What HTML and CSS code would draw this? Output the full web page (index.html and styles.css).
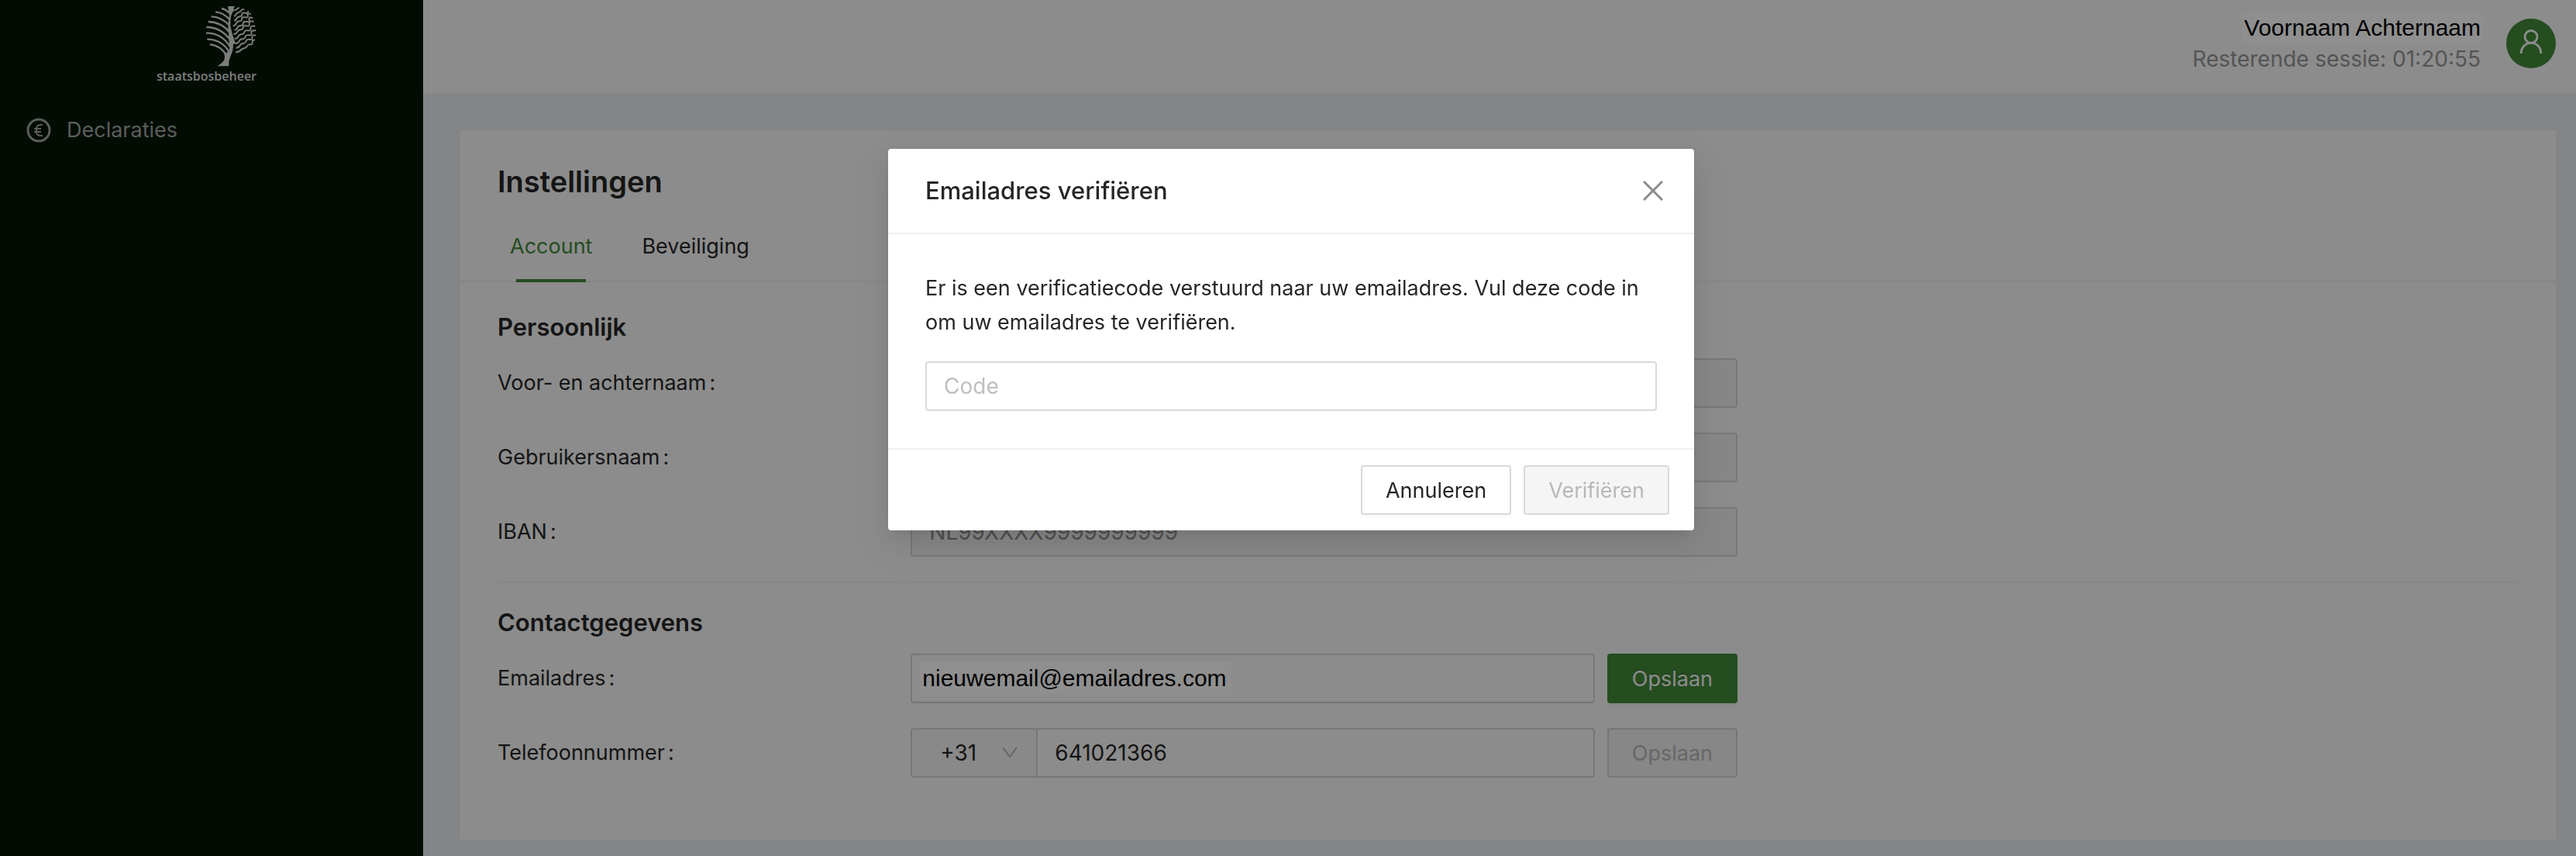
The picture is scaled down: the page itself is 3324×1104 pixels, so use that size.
FILE: index.html
```html
<!DOCTYPE html>
<html lang="nl">
<head>
  <meta charset="UTF-8" />
  <meta name="viewport" content="width=device-width, initial-scale=1.0"/>
  <title>Instellingen</title>
  <link rel="stylesheet" href="styles.css">
</head>
<body>

  <div class="layout">

    <!-- Sidebar -->
    <aside class="sidebar">
      <div class="logo">
        <svg class="logo-tree" viewBox="0 0 195 234" aria-hidden="true">
          <path fill="currentColor" d="M84 0h28l-6 8 4 8-8 8-5 12-3 18v22l7 30 6 19 8 20-11 2 1 8-3 20-8 20-6 18v19H44l16-12 9-10 3-12-2-14 12-6 8-8-1-34-2-28-2-20 1-28 4-24-2-14z"/>
          <g fill="none" stroke="currentColor" stroke-width="7">
            <path d="M60 9q16 3 33 20"/>
            <path d="M36 22q30 2 57 31"/>
            <path d="M20 40q38 0 71 35"/>
            <path d="M8 60q50 1 83 41"/>
            <path d="M1 81q56 0 92 49"/>
            <path d="M0 104q60-2 95 56"/>
            <path d="M4 128q56 0 86 50"/>
            <path d="M14 148q42 3 66 44"/>
          </g>
          <g fill="none" stroke="currentColor" stroke-width="6">
            <path d="M110 17q5-2 9-6t9-5"/>
            <path d="M108 38q5-1 8-7t11-8 9-7 12-3"/>
            <path d="M108 56q7-1 10-8t12-8 9-9 12-5 12-8"/>
            <path d="M104 76q9-1 12-9t13-9 9-9 13-6 10-8 12-5"/>
            <path d="M110 92q8-1 11-9t13-8 10-9 13-6 10-9 14-5"/>
            <path d="M106 108q10 0 14-8t13-9 10-9 14-6 10-9 18-8"/>
            <path d="M110 126q10 0 14-8t13-9 11-9 14-6 10-9 18-8"/>
            <path d="M113 144q10 0 14-8t13-9 12-9 14-6 9-9 18-9"/>
            <path d="M116 161q10 0 14-8t13-9 12-9 14-6 9-9 14-7"/>
            <path d="M114 178q14-1 19-7t14-8 12-9 12-6 8-9 10-8"/>
          </g>
        </svg>
        <span class="logo-name">staatsbosbeheer</span>
      </div>

      <nav class="menu">
        <a class="menu-item" href="#">
          <svg class="menu-icon" viewBox="0 0 32 32" fill="none" stroke="currentColor" aria-hidden="true">
            <circle cx="16" cy="16" r="14" stroke-width="3"/>
            <path stroke-width="2" d="M21 9h-2q-6 0-6 5v4q0 5 6 5h2M10 14h9M10 18h9"/>
          </svg>
          Declaraties
        </a>
      </nav>
    </aside>

    <div class="content">
      <!-- Header -->
      <header class="header">
        <div class="user-details">
          <span class="user-name">Voornaam Achternaam</span>
          <span class="user-session">Resterende sessie: 01:20:55</span>
        </div>
        <button class="avatar" type="button" aria-label="Gebruiker">
          <svg viewBox="0 0 32 34" fill="none" stroke="currentColor" stroke-width="3" aria-hidden="true">
            <circle cx="16" cy="10" r="8.5"/>
            <path d="M2.500 33v-1a13.500 13.500 0 0 1 27 0v1"/>
          </svg>
        </button>
      </header>

      <!-- Settings -->
      <main class="card">
        <h1 class="page-title">Instellingen</h1>

        <nav class="tabs">
          <a class="tab active" href="#account">Account</a>
          <a class="tab" href="#beveiliging">Beveiliging</a>
        </nav>

        <div class="card-body">
          <form class="form">
            <h2 class="section-title">Persoonlijk</h2>
            <div class="form-row">
              <label class="form-label" for="naam">Voor- en achternaam</label>
              <input class="input" type="text" id="naam" disabled>
            </div>
            <div class="form-row">
              <label class="form-label" for="gebruikersnaam">Gebruikersnaam</label>
              <input class="input" type="text" id="gebruikersnaam" disabled>
            </div>
            <div class="form-row">
              <label class="form-label" for="iban">IBAN</label>
              <input class="input" type="text" id="iban" value="NL99XXXX9999999999" disabled>
            </div>
          </form>

          <hr class="divider">

          <form class="form">
            <h2 class="section-title">Contactgegevens</h2>
            <div class="form-row">
              <label class="form-label" for="email">Emailadres</label>
              <div class="form-control">
                <div class="input-box">
                  <input class="email-input" type="email" id="email" value="nieuwemail@emailadres.com">
                </div>
                <button class="btn btn-primary" type="button">Opslaan</button>
              </div>
            </div>
            <div class="form-row">
              <label class="form-label" for="telefoon">Telefoonnummer</label>
              <div class="form-control">
                <div class="input-group">
                  <div class="prefix">
                    <select class="prefix-select" aria-label="Landcode">
                      <option>+31</option>
                    </select>
                    <svg class="prefix-arrow" viewBox="0 0 20 16" fill="none" stroke="currentColor" stroke-width="2" aria-hidden="true">
                      <path d="M1 1l9 12 9-12"/>
                    </svg>
                  </div>
                  <input class="input" type="tel" id="telefoon" value="641021366">
                </div>
                <button class="btn" type="button" disabled>Opslaan</button>
              </div>
            </div>
          </form>
        </div>
      </main>
    </div>
  </div>

  <!-- Modal -->
  <div class="modal-mask">
    <div class="modal" role="dialog" aria-modal="true" aria-labelledby="modalTitle">
      <div class="modal-header">
        <h3 class="modal-title" id="modalTitle">Emailadres verifiëren</h3>
        <button class="modal-close" type="button" aria-label="Sluiten">
          <svg viewBox="0 0 26 26" fill="none" stroke="currentColor" stroke-width="3" aria-hidden="true">
            <path d="M1 1l24 24M25 1L1 25"/>
          </svg>
        </button>
      </div>
      <div class="modal-body">
        <label class="modal-text" for="code">Er is een verificatiecode verstuurd naar uw emailadres. Vul deze code in om uw emailadres te verifiëren.</label>
        <input class="input" type="text" id="code" placeholder="Code">
      </div>
      <div class="modal-footer">
        <button class="btn" type="button">Annuleren</button>
        <button class="btn" type="button" disabled>Verifiëren</button>
      </div>
    </div>
  </div>

</body>
</html>
```
FILE: styles.css
```css
* {
  box-sizing: border-box;
}

body {
  margin: 0;
  font-family: Inter, "Liberation Sans", sans-serif;
  font-size: 27px;
  line-height: 44px;
  color: #262626;
  background-color: #eceef1;
}

button,
input,
select {
  font-family: inherit;
  font-size: inherit;
  color: inherit;
  margin: 0;
}

a {
  color: inherit;
  text-decoration: none;
}

.layout {
  display: flex;
  min-height: 100vh;
}

/* Sidebar */
.sidebar {
  flex: 0 0 546px;
  background-color: #051605;
}

.logo {
  display: flex;
  flex-direction: column;
  align-items: flex-end;
  width: 331px;
  height: 128px;
  padding-top: 8px;
  color: #dedede;
}

.logo-tree {
  width: 65px;
  height: 78px;
}

.logo-name {
  font-family: "Open Sans", sans-serif;
  font-size: 16px;
  font-weight: 600;
  line-height: 24px;
}

.menu-item {
  display: flex;
  align-items: center;
  gap: 20px;
  height: 80px;
  padding: 0 34px;
  color: #a5a7a5;
}

.menu-icon {
  width: 32px;
  height: 32px;
}

.content {
  flex: 1;
  min-width: 0;
}

/* Header */
.header {
  display: flex;
  justify-content: flex-end;
  align-items: center;
  gap: 30px;
  height: 120px;
  padding: 0 26px 8px;
  background-color: #fafafa;
}

.user-details {
  display: flex;
  flex-direction: column;
  align-items: flex-end;
  line-height: 40px;
}

.user-name {
  padding: 0 3px;
  font-family: "Liberation Sans", Arial, sans-serif;
  font-size: 30px;
  color: #000;
  background-color: #fff;
}

.user-session {
  padding-right: 3px;
  font-size: 28px;
  color: #969696;
}

.avatar {
  display: flex;
  align-items: center;
  justify-content: center;
  width: 64px;
  height: 64px;
  padding: 0 0 4px;
  border: none;
  border-radius: 50%;
  color: #fafafa;
  background-color: #43893a;
}

.avatar svg {
  width: 30px;
  height: 32px;
}

/* Settings card */
.card {
  margin: 48px 26px 0 48px;
  padding: 40px 0 48px;
  background-color: #fafafa;
}

.page-title {
  margin: 0 48px 12px;
  font-size: 38px;
  font-weight: 600;
  line-height: 52px;
}

.tabs {
  display: flex;
  gap: 64px;
  padding: 0 64px;
  border-bottom: 2px solid #eee;
}

.tab {
  position: relative;
  padding: 24px 0 22px;
}

.tab.active {
  color: #43893a;
}

.tab.active::after {
  content: "";
  position: absolute;
  left: 8px;
  right: 8px;
  bottom: -2px;
  height: 4px;
  background-color: #43893a;
}

.card-body {
  padding: 36px 48px 0;
}

.form {
  max-width: 1600px;
}

.section-title {
  margin: 0 0 18px;
  font-size: 31px;
  font-weight: 600;
}

.form-row {
  display: grid;
  grid-template-columns: 1fr 2fr;
  align-items: center;
  margin-bottom: 32px;
}

.form-label::after {
  content: ":";
  margin-left: 4px;
}

.form-control {
  display: grid;
  grid-template-columns: 1fr auto;
  gap: 16px;
}

.divider {
  height: 2px;
  margin: 0 0 29px;
  border: none;
  background-color: #f0f0f0;
}

/* Inputs */
.input,
.input-box {
  width: 100%;
  min-width: 0;
  height: 64px;
  padding: 0 22px;
  border: 2px solid #d5d5d5;
  border-radius: 4px;
  font-size: 28px;
  background-color: #fafafa;
}

.input:disabled {
  color: #8c8c8c;
  background-color: #f0f0f0;
}

.input::placeholder {
  color: #bfbfbf;
}

.input-box {
  display: flex;
  align-items: center;
  padding: 0 10px;
}

.email-input {
  width: 402px;
  height: 42px;
  padding: 0 3px;
  border: none;
  font-family: "Liberation Sans", Arial, sans-serif;
  font-size: 30px;
  color: #000;
  background-color: #fff;
}

.input-group {
  display: flex;
}

.input-group .input {
  border-radius: 0 4px 4px 0;
}

.prefix {
  position: relative;
  flex: 0 0 162px;
}

.prefix-select {
  width: 100%;
  height: 64px;
  padding: 0 36px;
  border: 2px solid #d5d5d5;
  border-right: none;
  border-radius: 4px 0 0 4px;
  font-size: 28px;
  background-color: #f5f5f5;
  appearance: none;
}

.prefix-arrow {
  position: absolute;
  top: 24px;
  right: 24px;
  width: 20px;
  height: 16px;
  color: #b5b5b5;
  pointer-events: none;
}

/* Buttons */
.btn {
  height: 64px;
  padding: 0 30px;
  border: 2px solid #d9d9d9;
  border-radius: 4px;
  background-color: #fff;
  box-shadow: 0 4px 0 rgba(0,0,0,0.02);
}

.btn:disabled {
  color: #b8b8b8;
  border-color: #d9d9d9;
  background-color: #f5f5f5;
  box-shadow: none;
}

.btn-primary {
  color: #fafafa;
  border-color: #43893a;
  background-color: #43893a;
  text-shadow: 0 -2px 0 rgba(0,0,0,0.12);
  box-shadow: 0 4px 0 rgba(0,0,0,0.04);
}

.card .btn:disabled {
  border-color: #d5d5d5;
  background-color: #f0f0f0;
}

/* Modal */
.modal-mask {
  position: fixed;
  top: 0;
  right: 0;
  bottom: 0;
  left: 0;
  padding: 192px 0 0 8px;
  background-color: rgba(0,0,0,0.44);
}

.modal {
  width: 1040px;
  max-width: 100%;
  margin: 0 auto;
  border-radius: 4px;
  background-color: #fff;
  box-shadow: 0 6px 12px -8px rgba(0,0,0,0.12), 0 12px 32px rgba(0,0,0,0.08), 0 18px 56px 16px rgba(0,0,0,0.05);
}

.modal-header {
  display: flex;
  justify-content: space-between;
  align-items: center;
  padding: 32px 40px 32px 48px;
  border-bottom: 2px solid #f0f0f0;
}

.modal-title {
  margin: 0;
  font-size: 31px;
  font-weight: 500;
}

.modal-close {
  display: flex;
  padding: 0;
  border: none;
  color: #8c8c8c;
  background: none;
}

.modal-close svg {
  width: 26px;
  height: 26px;
}

.modal-body {
  padding: 48px;
}

.modal-text {
  display: block;
  margin-bottom: 28px;
}

.modal .input {
  display: block;
  border-color: #d9d9d9;
  background-color: #fff;
}

.modal-footer {
  display: flex;
  justify-content: flex-end;
  gap: 16px;
  padding: 20px 32px;
  border-top: 2px solid #f0f0f0;
}
```
